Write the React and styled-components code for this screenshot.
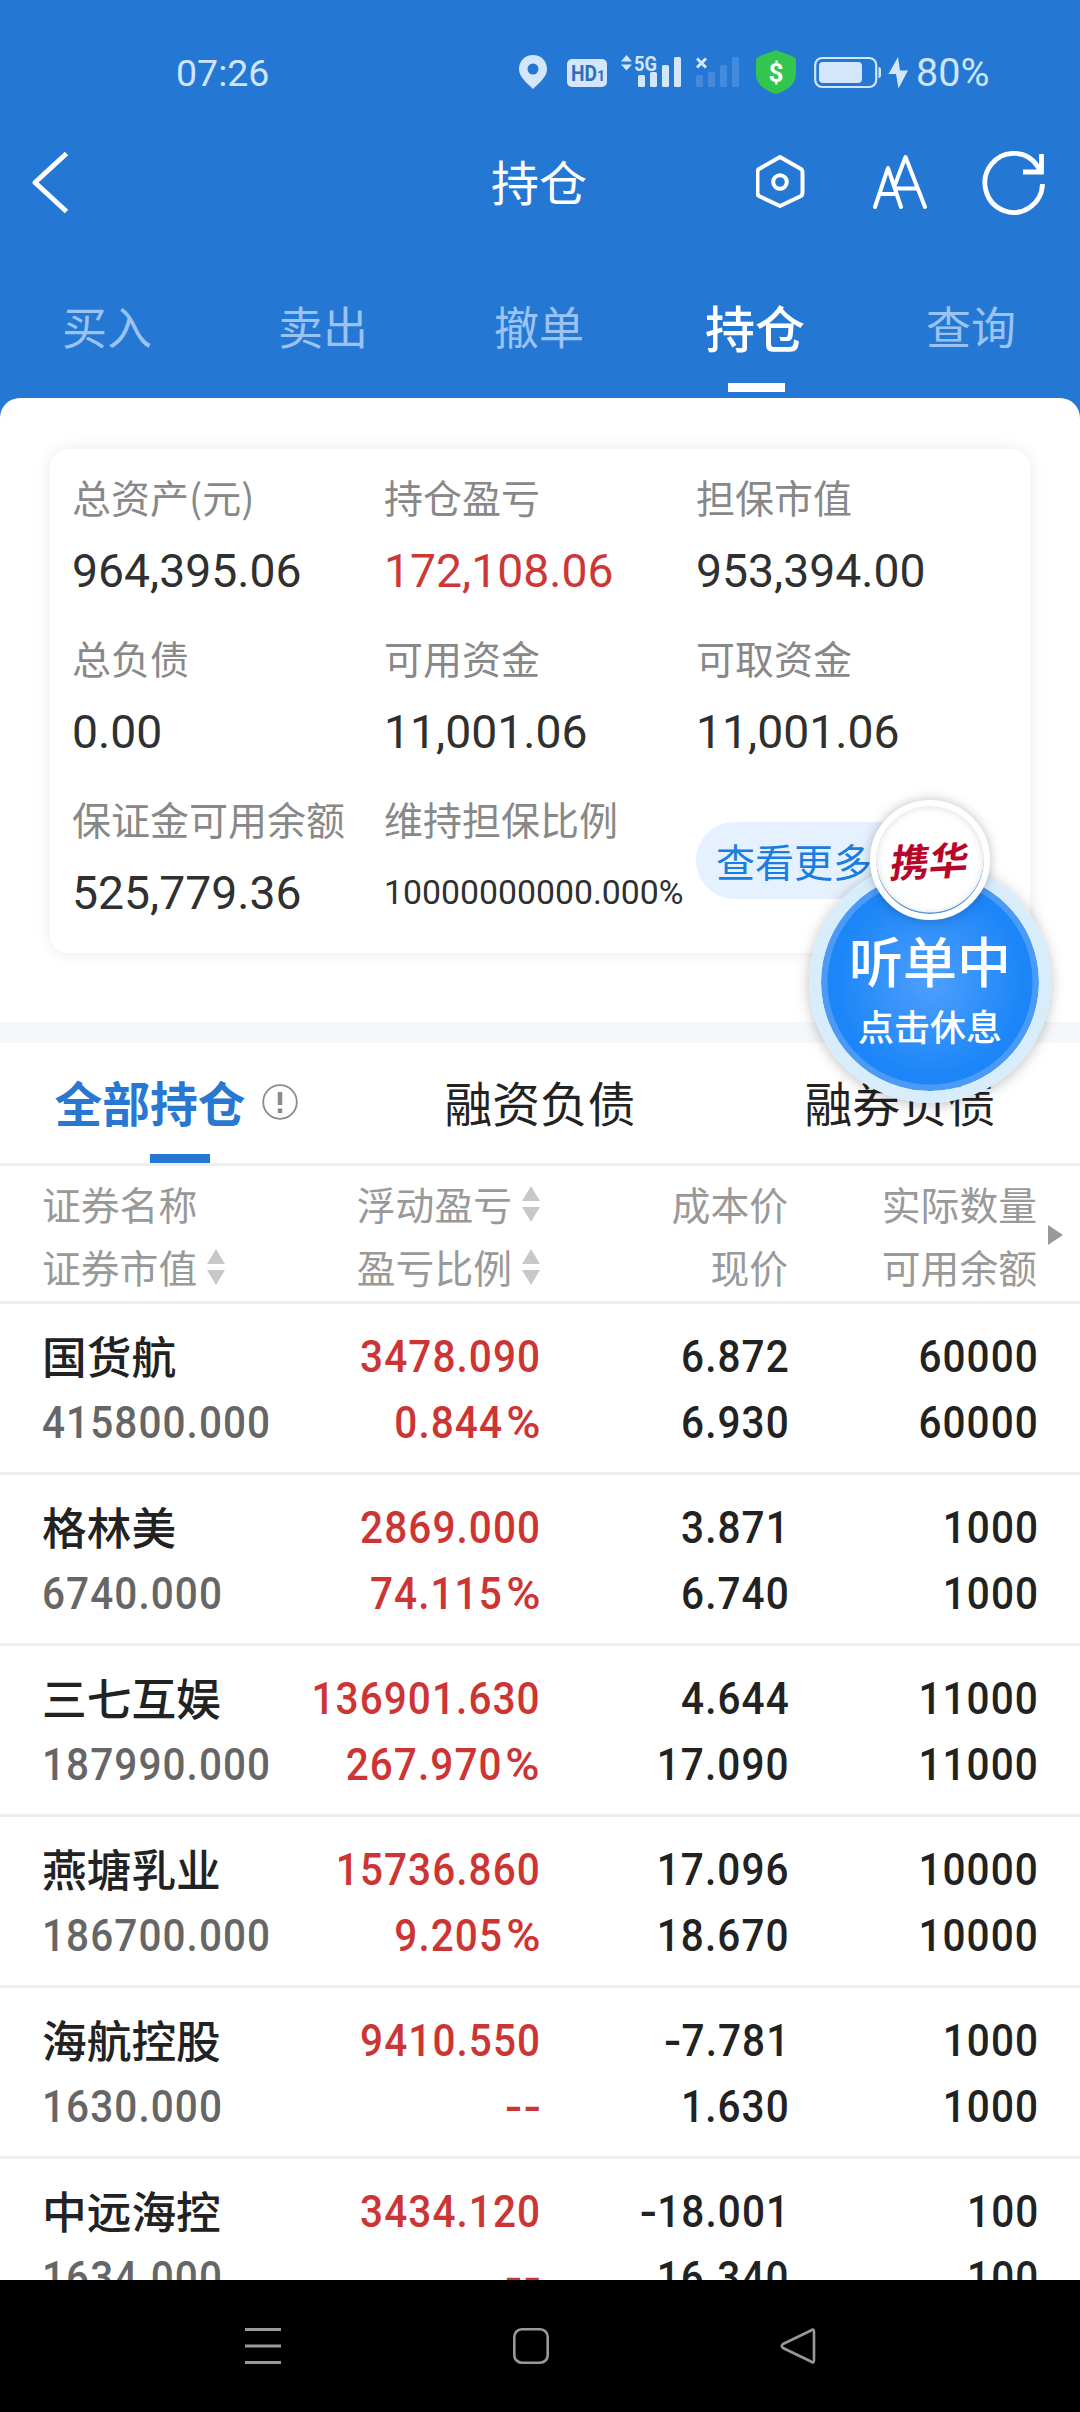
import React from 'react'
import styled, { createGlobalStyle } from "styled-components"

const cjk = `"Noto Sans CJK SC", "Noto Sans", sans-serif`
const latin = `Roboto, "Noto Sans CJK SC", sans-serif`

const GlobalStyle = createGlobalStyle`
    *{
        box-sizing:border-box;
    }
    body{
        margin:0;
        background:#fff;
        font-family:${cjk};
    }
`

const Screen = styled.div`
    position:relative;
    display:flex;
    flex-direction:column;
    width:1080px;
    height:2412px;
    overflow:hidden;
    background:#2577d4;
`

/* status bar */
const StatusBar = styled.div`
    display:flex;
    align-items:center;
    height:146px;
    padding:0 80px 0 176px;
    color:#cfe5fb;
    font-family:${latin};
    font-size:38px;
    line-height:46px;
`

const Clock = styled.span`
    width:343px;
    font-size:37.5px;
`

const Battery = styled.span`
    font-size:39.5px;
`

const StatusIcon = styled.svg`
    flex:none;
    width:${p => p.$w}px;
    height:46px;
    margin-right:${p => p.$gap}px;
    fill:#d3e6fa;
`

/* title bar */
const TitleBar = styled.header`
    display:grid;
    grid-template-columns:1fr auto 1fr;
    align-items:center;
    height:73px;
    padding:0 34px 0 32px;
`

const PageTitle = styled.h1`
    margin:0;
    padding-bottom:5px;
    color:#fff;
    font-size:48px;
    font-weight:400;
    line-height:68px;
`

const TitleActions = styled.div`
    display:flex;
    justify-content:flex-end;
    align-items:center;
`

const LineIcon = styled.svg`
    flex:none;
    display:block;
    fill:none;
    stroke:${p => p.$color || '#fff'};
    stroke-width:${p => p.$stroke || 4};
    stroke-linecap:${p => p.$cap || 'butt'};
    stroke-linejoin:round;
`

/* trade tabs */
const TradeTabs = styled.nav`
    display:flex;
    height:179px;
    padding-top:67px;
`

const TradeTab = styled.div`
    flex:1;
    display:flex;
    flex-direction:column;
    align-items:center;
    justify-content:space-between;
    padding-bottom:6px;
    color:${p => p.$active ? '#fff' : '#9ac3f3'};
    font-size:${p => p.$active ? 50 : 45}px;
    font-weight:${p => p.$active ? 500 : 400};
    line-height:80px;

    &::after{
        content:"";
        width:57px;
        height:9px;
        background:${p => p.$active ? '#fff' : 'transparent'};
    }
`

const TradeLabel = styled.span`
    margin-left:-2px;
`

const Sheet = styled.main`
    flex:1;
    min-height:0;
    overflow:hidden;
    border-radius:20px 20px 0 0;
    background:#fff;
`

/* account summary */
const Summary = styled.section`
    padding:51px 50px 69px;
    border-bottom:21px solid #f5f7fa;
`

const SummaryCard = styled.div`
    display:grid;
    grid-template-columns:repeat(3, 312px);
    grid-auto-rows:161px;
    height:504px;
    padding:20px 0 0 22px;
    border-radius:18px;
    background:#fff;
    box-shadow:0 0 16px rgba(0, 0, 0, 0.09);
`

const SummaryItem = styled.div`
    display:flex;
    flex-direction:column;
`

const ItemLabel = styled.span`
    color:#888;
    font-size:39px;
    line-height:54px;
    white-space:nowrap;
`

const ItemValue = styled.span`
    margin-top:17px;
    color:${p => p.$red ? '#cb3837' : '#303030'};
    font-family:${latin};
    font-size:${p => p.$small ? 33.8 : 46.3}px;
    line-height:62px;
    white-space:nowrap;
`

const MoreButton = styled.button`
    align-self:start;
    justify-self:start;
    width:236px;
    height:77px;
    margin-top:31px;
    padding:0 0 0 20px;
    border:0;
    border-radius:39px;
    background:#e5f1fe;
    color:#1a7de0;
    font-family:inherit;
    font-size:39px;
    line-height:77px;
    text-align:left;
`

/* holdings */
const HoldingTabs = styled.div`
    display:flex;
    height:123px;
    border-bottom:3px solid #eee;
`

const HoldingTab = styled.div`
    flex:1;
    display:flex;
    flex-direction:column;
    align-items:center;
    justify-content:space-between;
    padding-top:24px;
    color:${p => p.$active ? '#2877d0' : '#222'};
    font-size:47.8px;
    font-weight:${p => p.$active ? 700 : 400};
    line-height:70px;

    &::after{
        content:"";
        width:60px;
        height:9px;
        background:${p => p.$active ? '#2577d4' : 'transparent'};
    }
`

const TabLabel = styled.span`
    display:flex;
    align-items:center;
    gap:16px;
    margin-left:-8px;
`

const TableHead = styled.div`
    position:relative;
    display:grid;
    grid-template-columns:268px minmax(0, 1fr) 248px 249px;
    height:138px;
    padding:6px 43px 0 42px;
    border-bottom:3px solid #eee;
    color:#999;
    font-size:38.8px;
    line-height:63px;
`

const HeadCell = styled.div`
    display:flex;
    flex-direction:column;
    align-items:${p => p.$left ? 'flex-start' : 'flex-end'};
`

const HeadLabel = styled.span`
    display:flex;
    align-items:center;
    gap:10px;
    height:63px;
    white-space:nowrap;
`

const MoreColumns = styled.svg`
    position:absolute;
    right:17px;
    top:59px;
    fill:#999;
`

const HoldingRow = styled.div`
    display:grid;
    grid-template-columns:268px minmax(0, 1fr) 249px 249px;
    height:171px;
    padding:20px 41px 0 42px;
    border-bottom:3px solid #eee;
`

const Cell = styled.div`
    display:flex;
    flex-direction:column;
    align-items:${p => p.$left ? 'flex-start' : 'flex-end'};
    color:${p => p.$red ? '#cc3534' : '#222'};
`

const StockName = styled.span`
    height:66px;
    color:#222;
    font-size:44.7px;
    font-weight:500;
    line-height:61px;
`

const Num = styled.span`
    color:${p => p.$muted ? '#666' : 'inherit'};
    font-family:${latin};
    font-size:45px;
    font-weight:500;
    line-height:66px;
    letter-spacing:1.2px;
    white-space:nowrap;
    transform:scaleX(0.9);
    transform-origin:${p => p.$muted ? 'left' : 'right'} center;
`

/* % and - run wider than the digits */
const Sign = styled.span`
    display:inline-block;
    margin:0 ${p => p.$percent ? 2 : 1}px 0 ${p => p.$percent ? 6 : 3}px;
    transform:scaleX(${p => p.$percent ? 1.15 : 1.25});
`

/* floating order button */
const Floating = styled.div`
    position:absolute;
    left:809px;
    top:861px;
    display:flex;
    flex-direction:column;
    align-items:center;
    width:242px;
    height:242px;
    padding-top:56px;
    border:12px solid #d8edfc;
    border-radius:50%;
    background:radial-gradient(circle, #4f9ffc 0, #1c86f8 94px, #1c86f8 102px, #4a9af6 103px);
    background-clip:padding-box;
    box-shadow:0 2px 14px rgba(0, 0, 0, 0.25);
    color:#fff;
`

const FloatTitle = styled.span`
    height:62px;
    font-size:54px;
    font-weight:500;
    line-height:62px;
    white-space:nowrap;
`

const FloatHint = styled.span`
    margin-top:10px;
    font-size:36px;
    font-weight:500;
    line-height:48px;
    white-space:nowrap;
`

const Badge = styled.div`
    position:absolute;
    left:49px;
    top:-73px;
    display:flex;
    align-items:center;
    justify-content:center;
    width:120px;
    height:120px;
    border:6px solid #fff;
    border-radius:50%;
    background:#fff;
    box-shadow:0 0 12px rgba(0, 0, 0, 0.25), inset 0 -1.5px 0 #5b97d8, inset 0 0 8px rgba(0, 0, 0, 0.15);
    color:#b8062a;
    font-size:39px;
    font-weight:700;
    line-height:60px;
`

const BrushText = styled.span`
    padding-bottom:2px;
    white-space:nowrap;
    transform:skew(-8deg, -3deg);
`

/* system navigation */
const SystemNav = styled.footer`
    display:flex;
    align-items:center;
    justify-content:space-between;
    height:132px;
    padding:0 264px 0 245px;
    background:#000;
`

const summary = [
    { label: '总资产(元)', value: '964,395.06' },
    { label: '持仓盈亏', value: '172,108.06', red: true },
    { label: '担保市值', value: '953,394.00' },
    { label: '总负债', value: '0.00' },
    { label: '可用资金', value: '11,001.06' },
    { label: '可取资金', value: '11,001.06' },
    { label: '保证金可用余额', value: '525,779.36' },
    { label: '维持担保比例', value: '10000000000.000%', small: true },
]

const holdings = [
    ['国货航', '415800.000', '3478.090', '0.844%', '6.872', '6.930', '60000', '60000'],
    ['格林美', '6740.000', '2869.000', '74.115%', '3.871', '6.740', '1000', '1000'],
    ['三七互娱', '187990.000', '136901.630', '267.970%', '4.644', '17.090', '11000', '11000'],
    ['燕塘乳业', '186700.000', '15736.860', '9.205%', '17.096', '18.670', '10000', '10000'],
    ['海航控股', '1630.000', '9410.550', '--', '-7.781', '1.630', '1000', '1000'],
    ['中远海控', '1634.000', '3434.120', '--', '-18.001', '16.340', '100', '100'],
]

const SortIcon = () => (
    <svg width="18" height="36" viewBox="0 0 18 36" fill="#c8c8c8">
        <path d="M9 0 18 15H0Z" />
        <path d="M0 21H18L9 36Z" />
    </svg>
)

const Status = () => (
    <StatusBar>
        <Clock>07:26</Clock>
        <StatusIcon $w={28} $gap={20} viewBox="519 50 28 46">
            <path fillRule="evenodd" d="M533 55c-8 0-14 6-14 14 0 8 8 14 14 20 6-6 14-12 14-20 0-8-6-14-14-14Zm0 8.500a5.500 5.500 0 1 1 0 11 5.500 5.500 0 0 1 0-11Z" />
        </StatusIcon>
        <StatusIcon $w={40} $gap={14} viewBox="567 50 40 46">
            <rect x="567" y="59" width="40" height="28" rx="5" />
            <text x="571" y="81" fontSize="22" fontWeight="700" fill="#2c70bd" textLength="26" lengthAdjust="spacingAndGlyphs">HD</text>
            <text x="597" y="81" fontSize="14" fontWeight="700" fill="#2c70bd">1</text>
        </StatusIcon>
        <StatusIcon $w={60} $gap={15} viewBox="621 50 60 46">
            <path d="M621 61.500 626.500 55 632 61.500ZM621 64.500H632L626.500 70.500Z" />
            <text x="634" y="70.500" fontSize="21" fontWeight="700" textLength="23" lengthAdjust="spacingAndGlyphs">5G</text>
            <rect x="638" y="75" width="7" height="12" rx="1.500" />
            <rect x="650" y="72" width="7" height="15" rx="1.500" />
            <rect x="662" y="65" width="7" height="22" rx="1.500" />
            <rect x="674" y="57" width="7" height="30" rx="1.500" />
        </StatusIcon>
        <StatusIcon $w={43} $gap={17} viewBox="696 50 43 46">
            <path d="M697 58.500 706 67.500M706 58.500 697 67.500" stroke="#d3e6fa" strokeWidth="3" />
            <g fill="#448bdd">
                <rect x="696" y="75" width="7" height="12" rx="1.500" />
                <rect x="708" y="72" width="7" height="15" rx="1.500" />
                <rect x="720" y="65" width="7" height="22" rx="1.500" />
                <rect x="732" y="57" width="7" height="30" rx="1.500" />
            </g>
        </StatusIcon>
        <StatusIcon $w={40} $gap={18} viewBox="756 50 40 46">
            <path fill="#33c64f" d="M776 50 793 56.500q3 1.200 3 4V74c0 10-9 17-20 20-11-3-20-10-20-20V60.500q0-2.800 3-4Z" />
            <text x="776" y="81.500" fontSize="26" fontWeight="700" fill="#fff" textAnchor="middle">$</text>
        </StatusIcon>
        <StatusIcon $w={67} $gap={7} viewBox="814 50 67 46">
            <rect x="815.200" y="58" width="61" height="29" rx="7" fill="none" stroke="#d3e6fa" strokeWidth="2.200" />
            <rect x="819" y="62" width="43" height="21" rx="4" />
            <path d="M878.500 67q2.500 0 2.500 3v5q0 3-2.500 3Z" />
        </StatusIcon>
        <StatusIcon $w={20} $gap={8} viewBox="888 50 20 46">
            <path d="M898 57 888.500 74H896L898.500 88.500 908 70.500H900Z" />
        </StatusIcon>
        <Battery>80%</Battery>
    </StatusBar>
)

const Figure = ({ value, muted }) => (
    <Num $muted={muted}>
        {value.split(/([%-])/).filter(Boolean).map((part, i) => (
            part === '%' || part === '-' ? <Sign key={i} $percent={part === '%'}>{part}</Sign> : part
        ))}
    </Num>
)

const Holding = ({ row }) => (
    <HoldingRow>
        <Cell $left>
            <StockName>{row[0]}</StockName>
            <Figure muted value={row[1]} />
        </Cell>
        <Cell $red>
            <Figure value={row[2]} />
            <Figure value={row[3]} />
        </Cell>
        <Cell>
            <Figure value={row[4]} />
            <Figure value={row[5]} />
        </Cell>
        <Cell>
            <Figure value={row[6]} />
            <Figure value={row[7]} />
        </Cell>
    </HoldingRow>
)

export default function App() {
    return (
        <Screen>
            <GlobalStyle />
            <Status />
            <TitleBar>
                <LineIcon width="38" height="64" viewBox="32 151 38 64" $stroke={5}>
                    <path d="M66.500 153.500 35 182.500 66.500 211.500" />
                </LineIcon>
                <PageTitle>持仓</PageTitle>
                <TitleActions>
                    <LineIcon width="290" height="64" viewBox="756 151 290 64" $cap="round">
                        <path d="M780 157 801 169q1.500 1 1.500 3v21q0 2-1.500 3L780 206 759 196q-1.500-1-1.500-3v-21q0-2 1.500-3Z" />
                        <circle cx="780" cy="182" r="6.800" />
                        <path d="M875 207 888 168 901 207M880.500 194H896M894.500 186 905.500 157 925 207M896 188.500H917.500" />
                        <path strokeWidth="4.800" strokeLinecap="butt" d="M1042.500 184A28.800 29.500 0 1 1 1038 167L1041 173" />
                        <path strokeWidth="4.800" strokeLinecap="butt" strokeLinejoin="miter" d="M1041.500 154V172H1023" />
                    </LineIcon>
                </TitleActions>
            </TitleBar>
            <TradeTabs>
                <TradeTab><TradeLabel>买入</TradeLabel></TradeTab>
                <TradeTab><TradeLabel>卖出</TradeLabel></TradeTab>
                <TradeTab><TradeLabel>撤单</TradeLabel></TradeTab>
                <TradeTab $active><TradeLabel>持仓</TradeLabel></TradeTab>
                <TradeTab><TradeLabel>查询</TradeLabel></TradeTab>
            </TradeTabs>
            <Sheet>
                <Summary>
                    <SummaryCard>
                        {summary.map(item => (
                            <SummaryItem key={item.label}>
                                <ItemLabel>{item.label}</ItemLabel>
                                <ItemValue $red={item.red} $small={item.small}>{item.value}</ItemValue>
                            </SummaryItem>
                        ))}
                        <MoreButton>查看更多</MoreButton>
                    </SummaryCard>
                </Summary>
                <HoldingTabs>
                    <HoldingTab $active>
                        <TabLabel>
                            全部持仓
                            <LineIcon width="36" height="36" viewBox="0 0 36 36" $color="#8a8a8a" $stroke={1.8}>
                                <circle cx="18" cy="18" r="16.800" />
                                <path strokeWidth="4.500" d="M18 8V21M18 24.500V29" />
                            </LineIcon>
                        </TabLabel>
                    </HoldingTab>
                    <HoldingTab>融资负债</HoldingTab>
                    <HoldingTab>融券负债</HoldingTab>
                </HoldingTabs>
                <TableHead>
                    <HeadCell $left>
                        <HeadLabel>证券名称</HeadLabel>
                        <HeadLabel>证券市值<SortIcon /></HeadLabel>
                    </HeadCell>
                    <HeadCell>
                        <HeadLabel>浮动盈亏<SortIcon /></HeadLabel>
                        <HeadLabel>盈亏比例<SortIcon /></HeadLabel>
                    </HeadCell>
                    <HeadCell>
                        <HeadLabel>成本价</HeadLabel>
                        <HeadLabel>现价</HeadLabel>
                    </HeadCell>
                    <HeadCell>
                        <HeadLabel>实际数量</HeadLabel>
                        <HeadLabel>可用余额</HeadLabel>
                    </HeadCell>
                    <MoreColumns width="15" height="20" viewBox="0 0 15 20">
                        <path d="M0 0 15 10 0 20Z" />
                    </MoreColumns>
                </TableHead>
                {holdings.map(row => <Holding key={row[0]} row={row} />)}
            </Sheet>
            <SystemNav>
                <LineIcon width="36" height="36" viewBox="0 0 36 36" $color="#999" $stroke={3}>
                    <path d="M0 1.500H36M0 18H36M0 34.500H36" />
                </LineIcon>
                <LineIcon width="36" height="36" viewBox="0 0 36 36" $color="#999" $stroke={2.6}>
                    <rect x="1.300" y="1.300" width="33.400" height="33.400" rx="7.500" />
                </LineIcon>
                <LineIcon width="36" height="36" viewBox="0 0 36 36" $color="#999" $stroke={2.6}>
                    <path d="M31 2.500Q34 0 34 4V32Q34 36 31 33.500L3 20Q0.500 18 3 16Z" />
                </LineIcon>
            </SystemNav>
            <Floating>
                <FloatTitle>听单中</FloatTitle>
                <FloatHint>点击休息</FloatHint>
                <Badge><BrushText>携华</BrushText></Badge>
            </Floating>
        </Screen>
    )
}
